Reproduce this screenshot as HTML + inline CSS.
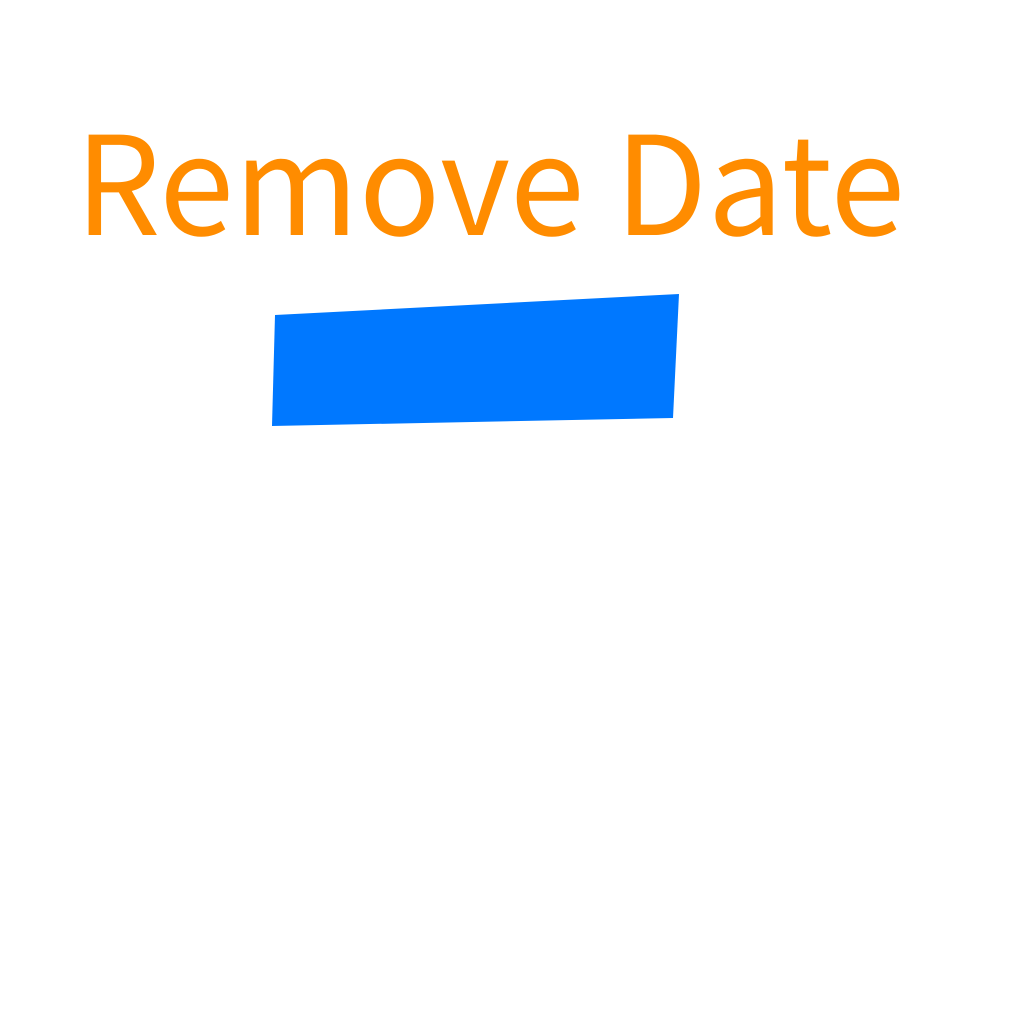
<!DOCTYPE html>
<html><head><meta charset="utf-8"><style>
html,body{margin:0;padding:0;background:#fff;width:1024px;height:1024px;overflow:hidden}
</style></head><body>
<svg width="1024" height="1024" viewBox="0 0 1024 1024" xmlns="http://www.w3.org/2000/svg">
<rect width="1024" height="1024" fill="#fff"/>
<text x="75" y="235" font-family="'Noto Sans CJK JP','Liberation Sans',sans-serif" font-size="137" fill="#FF8C00" textLength="830" lengthAdjust="spacingAndGlyphs">Remove Date</text>
<polygon points="275,315 679,294 673,418 272,426" fill="#0078FF"/>
</svg>
</body></html>
